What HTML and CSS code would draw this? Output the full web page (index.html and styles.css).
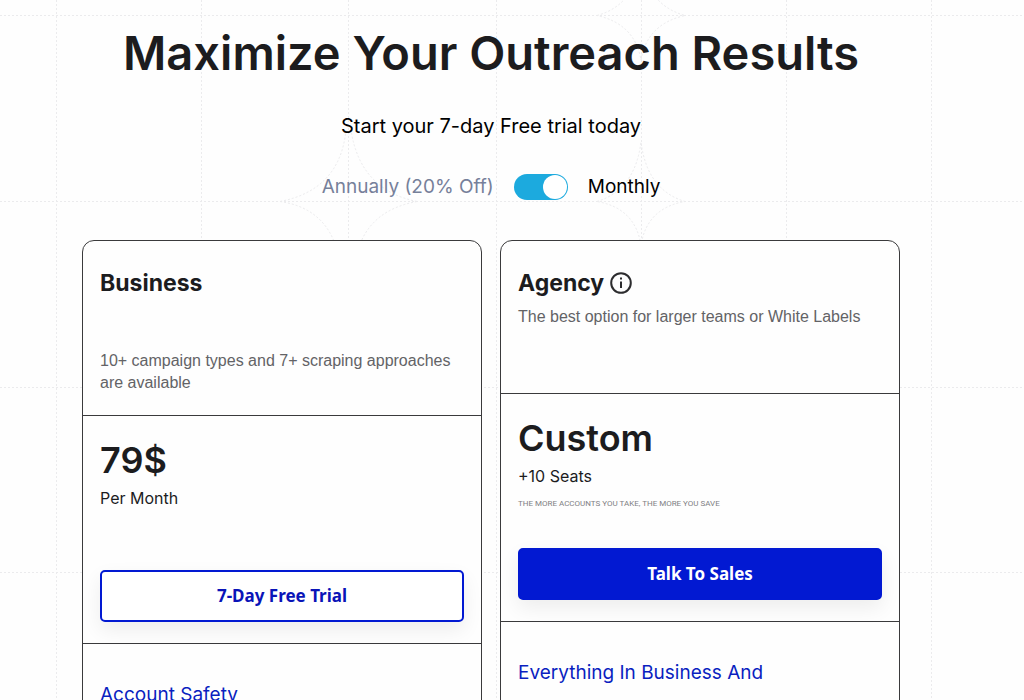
FILE: index.html
```html
<!DOCTYPE html>
<html lang="en">
<head>
  <meta charset="UTF-8">
  <meta name="viewport" content="width=device-width, initial-scale=1.0">
  <title>Pricing</title>
  <link rel="stylesheet" href="styles.css">
</head>
<body>
  <!-- Dotted grid background -->
  <svg class="grid-bg" aria-hidden="true" fill="none" stroke="#ebebed" stroke-dasharray="2 2">
    <path d="M56.5 0V2000M201.5 0V2000M348.5 0V2000M496.5 0V2000M641.5 0V2000M786.5 0V2000M931.5 0V2000"/>
    <path d="M0 15.500H2400M0 201.500H2400M0 387.500H2400M0 572.500H2400"/>
    <path d="M280 201.500Q340 190 346 130M417 201.500Q360 190 351 130M280 201.500Q325 208 337 250M417 201.500Q370 210 358 250"/>
    <path d="M597 201.500Q635 190 641 142Q647 190 685 201.500Q647 208 641 245Q635 208 597 201.500Z"/>
    <path d="M597 15.500Q635 5 641 -40Q647 5 685 15.500Q647 24 641 60Q635 24 597 15.500Z"/>
  </svg>

  <main class="pricing">
    <h1>Maximize Your Outreach Results</h1>
    <p class="subtitle">Start your 7-day Free trial today</p>

    <div class="billing">
      <label class="billing-off" for="billing">Annually (20% Off)</label>
      <input type="checkbox" id="billing" class="switch" checked>
      <label for="billing">Monthly</label>
    </div>

    <div class="plans">
      <article class="plan">
        <header class="plan-head">
          <h2>Business</h2>
          <p class="plan-text plan-text-low">10+ campaign types and 7+ scraping approaches are available</p>
        </header>
        <div class="plan-price">
          <p class="price">79$</p>
          <p class="period">Per Month</p>
          <p class="note"></p>
          <button type="button" class="btn btn-outline">7-Day Free Trial</button>
        </div>
        <div class="plan-features">
          <h3>Account Safety</h3>
        </div>
      </article>

      <article class="plan">
        <header class="plan-head">
          <h2>Agency
            <svg class="info" viewBox="0 0 22 22" fill="none" stroke="#2c2c2e" stroke-width="2" aria-hidden="true">
              <circle cx="11" cy="11" r="9.800"/>
              <path d="M11 9.500V16M11 5.500V7.500"/>
            </svg>
          </h2>
          <p class="plan-text">The best option for larger teams or White Labels</p>
        </header>
        <div class="plan-price">
          <p class="price">Custom</p>
          <p class="period">+10 Seats</p>
          <p class="note">The more accounts you take, the more you save</p>
          <button type="button" class="btn btn-solid">Talk To Sales</button>
        </div>
        <div class="plan-features">
          <h3>Everything In Business And</h3>
        </div>
      </article>
    </div>
  </main>
</body>
</html>
```

FILE: styles.css
```css
* {
  margin: 0;
  padding: 0;
  box-sizing: border-box;
}

body {
  position: relative;
  overflow-x: hidden;
  background: #fefefe;
  color: #1c1c1e;
  font-family: Inter, "Liberation Sans", sans-serif;
}

.grid-bg {
  position: absolute;
  top: 0;
  left: 0;
  width: 100%;
  height: 100%;
  z-index: -1;
}

.pricing {
  padding: 23px 42px 40px 0;
  text-align: center;
}

h1 {
  font-size: 47px;
  line-height: 60px;
  font-weight: 600;
}

.subtitle {
  margin-top: 28px;
  font-size: 20px;
  line-height: 30px;
  color: #000;
}

.billing {
  display: flex;
  justify-content: center;
  align-items: center;
  gap: 20px;
  margin-top: 31px;
  font-size: 19px;
  line-height: 30px;
  color: #000;
}

.billing-off {
  color: #76809a;
}

/* Toggle switch */
.switch {
  appearance: none;
  width: 54px;
  height: 26px;
  padding: 1px;
  border-radius: 13px;
  background: #1caade;
  cursor: pointer;
}

.switch::before {
  content: "";
  display: block;
  width: 24px;
  height: 24px;
  border-radius: 50%;
  background: #fff;
}

.switch:checked::before {
  margin-left: auto;
}

.plans {
  display: grid;
  grid-template-columns: 1fr 1fr;
  gap: 18px;
  max-width: 818px;
  margin: 38px auto 0;
  text-align: left;
}

.plan {
  border: 1px solid #3a3a3c;
  border-radius: 12px;
  background: #fefefe;
}

.plan-head {
  padding: 24px 17px 21px;
  border-bottom: 1px solid #3a3a3c;
}

h2 {
  display: flex;
  align-items: center;
  gap: 6px;
  font-size: 23px;
  line-height: 36px;
  font-weight: 700;
}

.info {
  width: 22px;
  height: 22px;
}

.plan-text {
  min-height: 66px;
  margin-top: 5px;
  font-family: "Liberation Sans", Arial, sans-serif;
  font-size: 16px;
  line-height: 22px;
  color: #636366;
}

.plan-text-low {
  padding-top: 44px;
}

.plan-price {
  padding: 20px 17px 21px;
  border-bottom: 1px solid #3a3a3c;
}

.price {
  font-size: 36px;
  line-height: 48px;
  font-weight: 600;
}

.period {
  margin-top: 2px;
  font-size: 16px;
  line-height: 24px;
}

.note {
  min-height: 16px;
  margin: 8px 0 36px;
  font-family: Roboto, sans-serif;
  font-size: 8px;
  line-height: 16px;
  text-transform: uppercase;
  color: #808084;
}

.btn {
  width: 100%;
  height: 52px;
  padding-bottom: 2px;
  border: 2px solid #0219d2;
  border-radius: 5px;
  font-family: "Noto Sans", sans-serif;
  font-size: 17px;
  font-weight: 700;
  box-shadow: 0 8px 20px rgba(0, 0, 0, 0.07);
  cursor: pointer;
}

.btn-outline {
  background: #fff;
  color: #0a14b8;
}

.btn-solid {
  background: #0219d2;
  color: #fff;
}

.plan-features {
  padding: 36px 17px;
}

h3 {
  font-size: 19px;
  line-height: 30px;
  font-weight: 400;
  color: #0a1fc0;
}

@media (max-width: 700px) {
  .pricing {
    padding: 24px 16px;
  }
  .plans {
    grid-template-columns: 1fr;
  }
  h1 {
    font-size: 36px;
    line-height: 44px;
  }
}
```
